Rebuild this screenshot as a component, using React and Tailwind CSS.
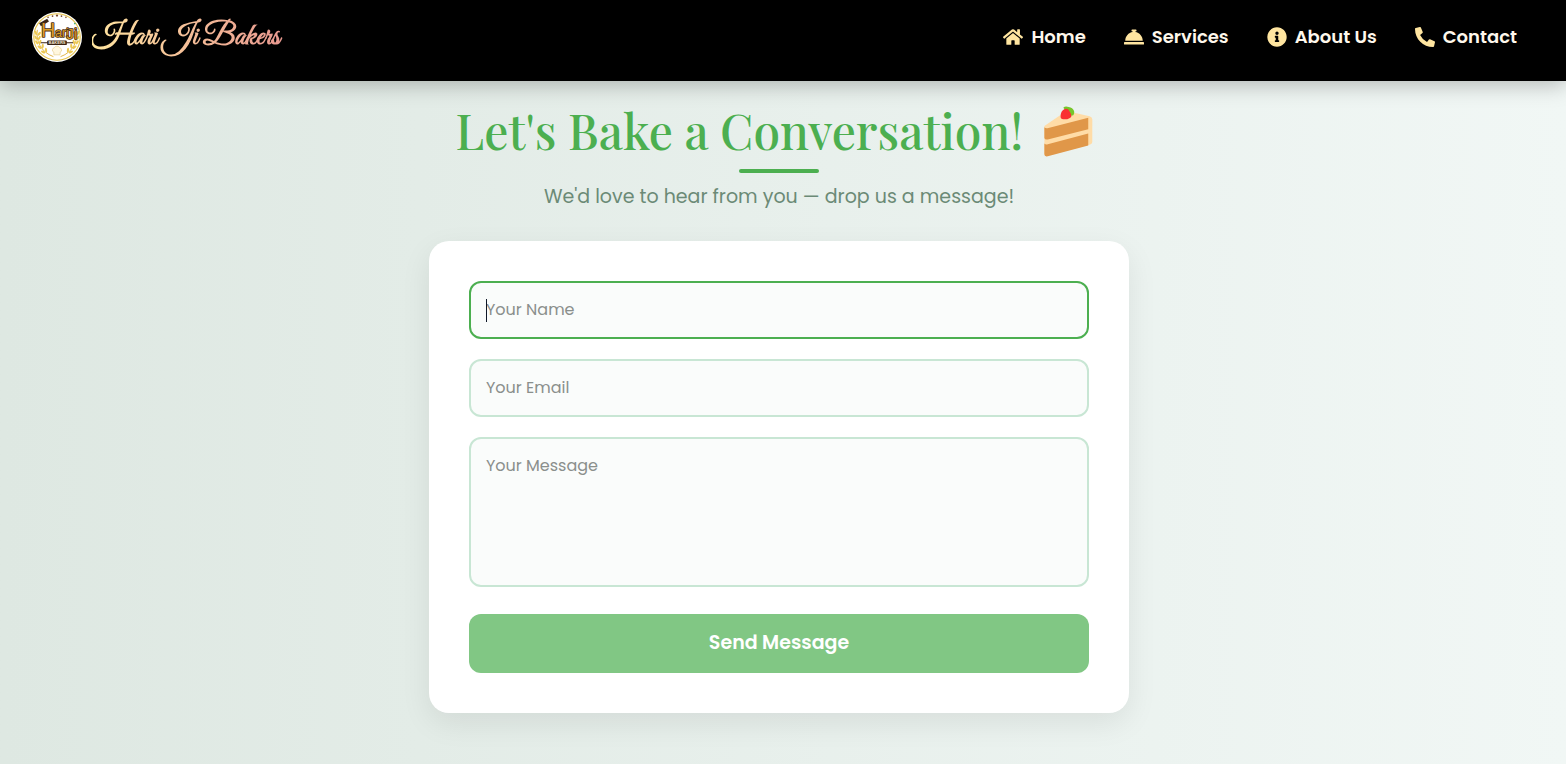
import { FaHome, FaConciergeBell, FaInfoCircle, FaPhoneAlt } from "react-icons/fa";

const links = [
  { label: "Home", href: "#home", Icon: FaHome },
  { label: "Services", href: "#services", Icon: FaConciergeBell },
  { label: "About Us", href: "#about", Icon: FaInfoCircle },
  { label: "Contact", href: "#contact", Icon: FaPhoneAlt },
];

const fieldClass =
  "block w-full rounded-xl border-2 border-[#c8e6d4] bg-[#fafcfb] px-[15px] text-base leading-6 text-gray-900 placeholder:text-[#8a8f8c] outline-none focus:border-[#4caf50]";

const leaves = [
  [6, 24, 8],
  [6, 29, 0],
  [7, 34, -10],
  [10, 39, -24],
  [14, 44, -38],
];

function Wheat() {
  return (
    <g>
      <path d="M6 20C4 32 10 45 24 50" fill="none" stroke="#d9a520" strokeWidth=".9" />
      {leaves.map(([x, y, r]) => (
        <g key={y} transform={`translate(${x} ${y}) rotate(${r})`}>
          <ellipse cx="-1.400" cy="-1" rx="1.200" ry="2.600" transform="rotate(-25)" fill="#ecc850" />
          <ellipse cx="1.900" cy="-1" rx="1.200" ry="2.600" transform="rotate(30)" fill="#ecc850" />
        </g>
      ))}
    </g>
  );
}

function Logo() {
  return (
    <svg viewBox="0 0 56 56" className="size-[50px] shrink-0" aria-hidden="true">
      <circle cx="28" cy="28" r="28" fill="#fff" />
      <circle cx="28" cy="28" r="26" fill="none" stroke="#e6c24a" strokeWidth="1.200" />
      <Wheat />
      <g transform="translate(56 0) scale(-1 1)">
        <Wheat />
      </g>
      <g fill="#7a4a2a">
        <circle cx="18" cy="6" r=".9" />
        <circle cx="23" cy="4.500" r="1" />
        <circle cx="28" cy="4" r="1.300" />
        <circle cx="33" cy="4.500" r="1" />
        <circle cx="38" cy="6" r=".9" />
      </g>
      <path d="M8 12.500l9-5 2 3-9 5.500z" fill="#3b2414" />
      <text
        x="10"
        y="28"
        fontFamily="Liberation Sans Narrow, Liberation Sans, sans-serif"
        fontWeight="400"
        fontSize="22"
        fill="#d99c28"
        stroke="#4a2c14"
        strokeWidth="1.800"
        strokeLinejoin="round"
        paintOrder="stroke"
      >
        H<tspan fontSize="14">ari</tspan>
        <tspan fontSize="17" dx="-3" dy="2">Ji</tspan>
      </text>
      <path d="M10 34.500h36" stroke="#3b2414" strokeWidth="1.200" />
      <rect x="17" y="32" width="22" height="5" rx="1" fill="#3b2414" />
      <text x="28" y="36.200" textAnchor="middle" fontFamily="Liberation Sans, sans-serif" fontWeight="700" fontSize="4.500" fill="#f3e6cf">BAKERS</text>
      <path d="M24.500 48v-3a2.600 2.600 0 0 1 .6-5 3.200 3.200 0 0 1 5.800 0 2.600 2.600 0 0 1 .6 5v3z" fill="#fff7df" stroke="#e7cf90" strokeWidth=".8" />
      <circle cx="48" cy="13" r=".9" fill="#28a36a" />
    </svg>
  );
}

function Cake() {
  return (
    <svg viewBox="0 -3 80 80" className="h-[54px] w-[54px] shrink-0" role="img" aria-label="Cake slice">
      <path d="M5 31L36 10q2-1 5-.5l31 7q4 1 4 5v33q0 3-3 4L9 75q-4 1-4-3z" fill="#ffdca7" />
      <path d="M5 33q2 2 6 1l59-15v17L10 51q-4 1-5-2z" fill="#e09749" />
      <path d="M5 57q2 2 5 1l60-16v18L10 76q-5 1-5-3z" fill="#e09749" />
      <path d="M33 4q3-3 8-1 6 1 8 6 1 3-1 6l-4 1z" fill="#76c62b" />
      <path d="M29 17q0-8 6-11 5-2 7 3 3 4 3 8-3 5-12 4-4 0-4-4z" fill="#f92f32" />
    </svg>
  );
}

export default function App() {
  return (
    <div className="flex min-h-screen flex-col bg-linear-to-r from-[#dee8e2] to-[#f1f7f5] font-['Poppins','Inter',sans-serif]">
      <header className="relative flex h-[81px] items-center justify-between bg-black pr-[49px] pb-2 pl-8 shadow-[0_4px_20px_rgba(0,0,0,0.25)]">
        <a href="#home" className="flex items-center gap-2.5">
          <Logo />
          <span className="bg-linear-to-r from-[#ffe5a0] to-[#e8988f] bg-clip-text pr-1 font-['Great_Vibes','Liberation_Serif',serif] text-[30px] leading-10 font-bold text-transparent">
            Hari Ji Bakers
          </span>
        </a>
        <nav className="flex items-center gap-[38px]">
          {links.map(({ label, href, Icon }) => (
            <a key={label} href={href} className="flex items-center gap-2 text-lg font-semibold text-[#fff8ec]">
              <Icon size={20} className="text-[#ffe5a0]" aria-hidden="true" />
              {label}
            </a>
          ))}
        </nav>
      </header>
      <main className="flex flex-col items-center pt-4 pr-2 pb-12">
        <h1 className="flex items-center gap-[18px] pr-[7px] font-['Playfair_Display','Liberation_Serif',serif] text-5xl leading-[66px] font-medium text-[#4caf50]">
          Let's Bake a Conversation!
          <Cake />
        </h1>
        <div className="mt-1.5 h-1 w-20 rounded-xs bg-[#4caf50]" />
        <p className="mt-2 text-[19px] leading-8 text-[#6b8a76]">We'd love to hear from you — drop us a message!</p>
        <form
          onSubmit={(e) => e.preventDefault()}
          className="mt-7 flex w-full max-w-[700px] flex-col gap-5 rounded-[20px] bg-white p-10 shadow-[0_10px_30px_rgba(0,0,0,0.08)]"
        >
          <div className="relative">
            <input
              type="text"
              aria-label="Your Name"
              placeholder="Your Name"
              autoFocus
              className={`${fieldClass} peer h-[58px] pb-0.5 caret-transparent not-placeholder-shown:caret-gray-900`}
            />
            <span
              aria-hidden="true"
              className="pointer-events-none absolute top-[18px] left-[17px] hidden h-[23px] w-px bg-gray-900 peer-placeholder-shown:peer-focus:block"
            />
          </div>
          <input type="email" aria-label="Your Email" placeholder="Your Email" className={`${fieldClass} h-[58px] pb-0.5`} />
          <textarea aria-label="Your Message" placeholder="Your Message" className={`${fieldClass} h-[150px] resize-none py-[15px]`} />
          <button type="submit" className="mt-[7px] h-[59px] rounded-xl bg-[#81c784] text-[19px] font-semibold text-white">
            Send Message
          </button>
        </form>
      </main>
    </div>
  );
}
